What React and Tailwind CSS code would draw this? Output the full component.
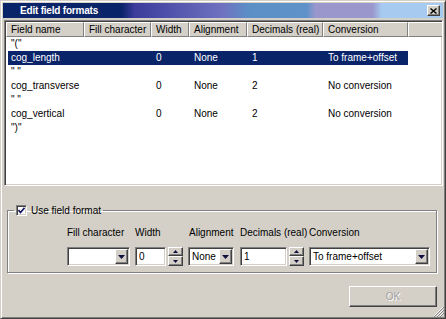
import React from 'react';

const sunken =
  'border border-t-[#808080] border-l-[#808080] border-r-white border-b-white shadow-[inset_1px_1px_0_#404040,inset_-1px_-1px_0_#d4d0c8]';
const raised =
  'border border-t-white border-l-white border-r-[#404040] border-b-[#404040] shadow-[inset_-1px_-1px_0_#808080] bg-[#d4d0c8]';

const columns = [
  { title: 'Field name', w: 'w-[78px]' },
  { title: 'Fill character', w: 'w-[67px]' },
  { title: 'Width', w: 'w-[38px]' },
  { title: 'Alignment', w: 'w-[58px]' },
  { title: 'Decimals (real)', w: 'w-[76px]' },
  { title: 'Conversion', w: 'w-[85px]' },
];

const rows = [
  { sep: '"("' },
  { cells: ['cog_length', '', '0', 'None', '1', 'To frame+offset'], selected: true },
  { sep: '" "' },
  { cells: ['cog_transverse', '', '0', 'None', '2', 'No conversion'] },
  { sep: '" "' },
  { cells: ['cog_vertical', '', '0', 'None', '2', 'No conversion'] },
  { sep: '")"' },
];

const Arrow = () => (
  <svg width="7" height="4" viewBox="0 0 7 4">
    <path d="M0 0 L7 0 L3.5 4 Z" fill="#101040" />
  </svg>
);

const Combo = ({ value, w }) => (
  <div className={`${sunken} ${w} h-[19px] bg-white flex items-center`}>
    <span className="flex-1 pl-[3px] text-[10px] text-black leading-none">{value}</span>
    <div className={`${raised} w-[13px] h-[15px] mr-[1px] flex items-center justify-center`}>
      <Arrow />
    </div>
  </div>
);

const Spin = ({ value }) => (
  <div className="flex items-center gap-[2px]">
    <div className={`${sunken} flex-1 h-[19px] bg-white flex items-center pl-[3px] text-[10px]`}>{value}</div>
    <div className="flex flex-col w-[15px] h-[19px]">
      <div className={`${raised} h-[9px] flex items-center justify-center`}>
        <svg width="5" height="3" viewBox="0 0 5 3"><path d="M2.5 0 L5 3 L0 3 Z" fill="#101040" /></svg>
      </div>
      <div className={`${raised} h-[10px] flex items-center justify-center`}>
        <svg width="5" height="3" viewBox="0 0 5 3"><path d="M0 0 L5 0 L2.5 3 Z" fill="#101040" /></svg>
      </div>
    </div>
  </div>
);

export default function App() {
  return (
    <div className="w-[446px] h-[319px] bg-[#d4d0c8] border border-t-[#d4d0c8] border-l-[#d4d0c8] border-r-[#404040] border-b-[#404040] shadow-[inset_1px_1px_0_#fff,inset_-1px_-1px_0_#808080] p-[2px] flex flex-col font-['Liberation_Sans',Arial,sans-serif] text-[10px] text-black relative">
      {/* title bar */}
      <div className="h-[15px] flex items-center bg-[linear-gradient(90deg,#0a246a_0%,#0a246a_27%,#3c3c9c_30%,#6f72c0_50%,#5b8fc6_56%,#5f92c8_69%,#9a97cc_71%,#9a97cc_84%,#a6caf0_86%,#a6caf0_100%)]">
        <span className="pl-[17px] flex-1 text-white font-bold text-[10px] leading-none tracking-[-0.2px]">Edit field formats</span>
        <div className={`${raised} w-[13px] h-[11px] mr-[3px] flex items-center justify-center`}>
          <svg width="7" height="6" viewBox="0 0 7 6">
            <path d="M0.5 0.5 L6.5 5.5 M6.5 0.5 L0.5 5.5" stroke="#000" strokeWidth="1.4" />
          </svg>
        </div>
      </div>

      {/* list */}
      <div className={`${sunken} ml-[1px] mt-[2px] h-[166px] bg-white flex flex-col overflow-hidden`}>
        <div className="flex h-[15px] ml-[1px] mt-[1px]">
          {columns.map((c) => (
            <div
              key={c.title}
              className={`${c.w} shrink-0 bg-[#d4d0c8] border-t border-l border-t-white border-l-white border-r border-b border-r-[#808080] border-b-[#808080] pl-[4px] flex items-center leading-none whitespace-nowrap overflow-hidden`}
            >
              {c.title}
            </div>
          ))}
          <div className="flex-1 bg-[#d4d0c8] border-t border-l border-t-white border-l-white border-b border-b-[#808080]" />
        </div>
        <div className="flex flex-col ml-[1px]">
          {rows.map((r, i) =>
            r.sep ? (
              <div key={i} className="h-[14px] pl-[5px] flex items-center leading-none">{r.sep}</div>
            ) : (
              <div key={i} className={`h-[14px] ml-[2px] flex items-center w-[400px] ${r.selected ? 'bg-[#0a246a] text-white' : ''}`}>
                {r.cells.map((cell, j) => (
                  <div key={j} className={`${columns[j].w} shrink-0 pl-[3px] leading-none whitespace-nowrap`}>
                    {cell}
                  </div>
                ))}
              </div>
            )
          )}
        </div>
      </div>

      {/* options */}
      <fieldset className="mt-[19px] ml-[4px] w-[430px] border border-[#808080] shadow-[1px_1px_0_#fff,inset_1px_1px_0_#fff] pb-[6px]">
        <legend className="ml-[6px] px-[2px] flex items-center gap-[4px]">
          <span className={`${sunken} w-[11px] h-[11px] bg-white flex items-center justify-center`}>
            <svg width="7" height="7" viewBox="0 0 7 7">
              <path d="M0.5 3 L2.5 5.5 L6.5 0.8" stroke="#101060" strokeWidth="1.6" fill="none" />
            </svg>
          </span>
          <span className="leading-none">Use field format</span>
        </legend>
        <div className="flex gap-[5px] pl-[59px] pt-[11px]">
          <div className="w-[63px] flex flex-col gap-[8px]">
            <span className="leading-[12px]">Fill character</span>
            <Combo value="" w="w-[63px]" />
          </div>
          <div className="w-[48px] flex flex-col gap-[8px]">
            <span className="leading-[12px]">Width</span>
            <Spin value="0" />
          </div>
          <div className="w-[47px] flex flex-col gap-[8px]">
            <span className="leading-[12px] pl-[1px]">Alignment</span>
            <Combo value="None" w="w-[46px]" />
          </div>
          <div className="w-[64px] flex flex-col gap-[8px]">
            <span className="leading-[12px] whitespace-nowrap">Decimals (real)</span>
            <Spin value="1" />
          </div>
          <div className="w-[121px] flex flex-col gap-[8px]">
            <span className="leading-[12px]">Conversion</span>
            <Combo value="To frame+offset" w="w-[121px]" />
          </div>
        </div>
      </fieldset>

      <div className="flex justify-end mt-[13px] mr-[6px]">
        <div className={`${raised} w-[88px] h-[21px] flex items-center justify-center text-[#a0a0a0] [text-shadow:1px_1px_0_#fff]`}>
          OK
        </div>
      </div>

      <svg className="absolute right-[1px] bottom-[1px]" width="11" height="11" viewBox="0 0 11 11">
        <path d="M10 1 L1 10 M10 4 L4 10 M10 7 L7 10" stroke="#fff" strokeWidth="1" />
        <path d="M11 1 L1 11 M11 4 L4 11 M11 7 L7 11" stroke="#808080" strokeWidth="1" />
      </svg>
    </div>
  );
}
